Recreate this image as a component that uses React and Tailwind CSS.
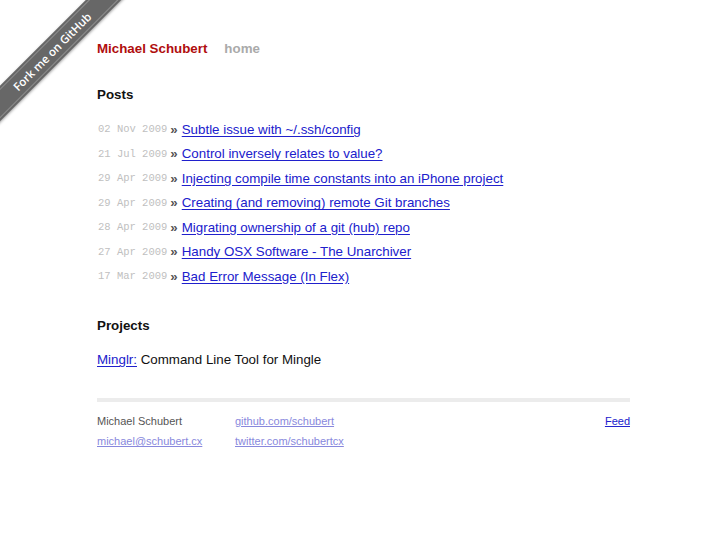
import React from "react";

const posts = [
  { date: "02 Nov 2009", title: "Subtle issue with ~/.ssh/config" },
  { date: "21 Jul 2009", title: "Control inversely relates to value?" },
  { date: "29 Apr 2009", title: "Injecting compile time constants into an iPhone project" },
  { date: "29 Apr 2009", title: "Creating (and removing) remote Git branches" },
  { date: "28 Apr 2009", title: "Migrating ownership of a git (hub) repo" },
  { date: "27 Apr 2009", title: "Handy OSX Software - The Unarchiver" },
  { date: "17 Mar 2009", title: "Bad Error Message (In Flex)" },
];

function Ribbon() {
  return (
    <div className="pointer-events-none absolute left-0 top-0 h-[150px] w-[150px] overflow-hidden">
      <div className="absolute left-[-48.5px] top-[39px] flex h-[25px] w-[200px] -rotate-45 items-center justify-center bg-[#676767] shadow-[0_1px_3px_rgba(0,0,0,0.4)]">
        <div className="absolute inset-x-0 top-[2px] h-px bg-[#8f8f8f]" />
        <div className="absolute inset-x-0 bottom-[2px] h-px bg-[#8f8f8f]" />
        <span className="text-[11.5px] font-semibold text-white [font-family:'Open_Sans','Liberation_Sans',sans-serif]">
          Fork me on GitHub
        </span>
      </div>
    </div>
  );
}

export default function App() {
  return (
    <div className="relative min-h-[545px] w-full bg-white [font-family:'Liberation_Sans',Arial,sans-serif] text-[13.33px] text-[#111]">
      <Ribbon />
      <div className="ml-[97px] w-[533px] pt-[41px]">
        <div className="flex h-[16px] items-center gap-[17px] font-bold leading-[16px]">
          <a className="text-[#b00e0e]">Michael Schubert</a>
          <a className="text-[#aaaaaa]">home</a>
        </div>

        <h3 className="mt-[30px] h-[16px] font-bold leading-[16px]">Posts</h3>
        <ul className="mt-[14.7px] flex flex-col">
          {posts.map((p, i) => (
            <li key={i} className="flex h-[24.5px] items-center">
              <span className="pl-px text-[10.5px] text-[#c0c0c0] [font-family:'Liberation_Mono','Courier_New',monospace]">
                {p.date}
              </span>
              <span className="ml-[3px] mr-[4px] font-bold text-[#555]">»</span>
              <a className="text-[#2020cc] underline underline-offset-[2px]">{p.title}</a>
            </li>
          ))}
        </ul>

        <h3 className="mt-[29px] h-[16px] font-bold leading-[16px]">Projects</h3>
        <p className="mt-[18px] h-[16px] leading-[16px]">
          <a className="text-[#2020cc] underline underline-offset-[2px]">Minglr:</a> Command Line Tool for Mingle
        </p>

        <div className="mt-[30px] h-[4px] bg-[#ececec]" />

        <div className="mt-[9px] flex text-[11px] leading-[20px]">
          <div className="flex w-[138px] flex-col">
            <span className="text-[#555]">Michael Schubert</span>
            <a className="text-[#8888dd] underline">michael@schubert.cx</a>
          </div>
          <div className="flex flex-col">
            <a className="text-[#8888dd] underline">github.com/schubert</a>
            <a className="text-[#8888dd] underline">twitter.com/schubertcx</a>
          </div>
          <div className="ml-auto">
            <a className="text-[#2020cc] underline">Feed</a>
          </div>
        </div>
      </div>
    </div>
  );
}
